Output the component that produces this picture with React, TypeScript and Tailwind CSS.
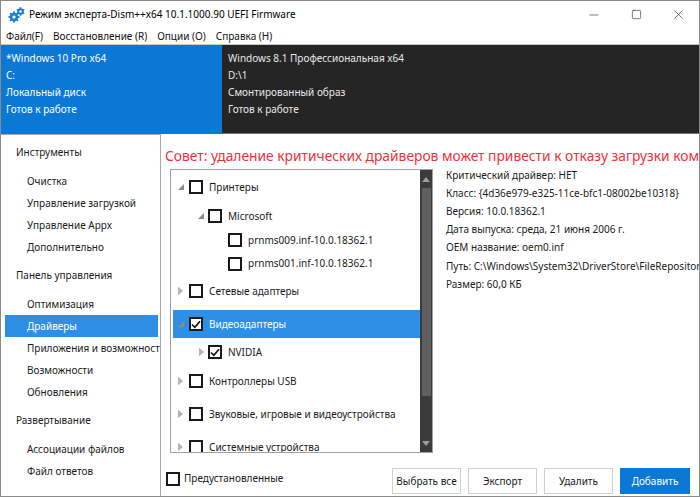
import { Minus, Square, X } from "lucide-react";

const FONT = { fontFamily: '"Noto Sans", "Open Sans", sans-serif' };

type Row = {
  label: string;
  level: 0 | 1 | 2;
  arrow: "open" | "closed" | null;
  checked?: boolean;
  selected?: boolean;
  cls: string;
};

const ROWS: Row[] = [
  { label: "Принтеры", level: 0, arrow: "open", cls: "mt-[5px] h-[24px]" },
  { label: "Microsoft", level: 1, arrow: "open", cls: "mt-[5px] h-[24px]" },
  { label: "prnms009.inf-10.0.18362.1", level: 2, arrow: null, cls: "mt-0 h-[24px]" },
  { label: "prnms001.inf-10.0.18362.1", level: 2, arrow: null, cls: "mt-0 h-[23px]" },
  { label: "Сетевые адаптеры", level: 0, arrow: "closed", cls: "mt-[4px] h-[24px]" },
  { label: "Видеоадаптеры", level: 0, arrow: "open", checked: true, selected: true, cls: "mt-[7px] h-[28px]" },
  { label: "NVIDIA", level: 1, arrow: "closed", checked: true, cls: "mt-[2px] h-[24px]" },
  { label: "Контроллеры USB", level: 0, arrow: "closed", cls: "mt-[5px] h-[24px]" },
  { label: "Звуковые, игровые и видеоустройства", level: 0, arrow: "closed", cls: "mt-[9px] h-[24px]" },
  { label: "Системные устройства", level: 0, arrow: "closed", cls: "mt-[9px] h-[24px]" },
];

const INFO = [
  "Критический драйвер: НЕТ",
  "Класс: {4d36e979-e325-11ce-bfc1-08002be10318}",
  "Версия: 10.0.18362.1",
  "Дата выпуска: среда, 21 июня 2006 г.",
  "OEM название: oem0.inf",
  "Путь: C:\\Windows\\System32\\DriverStore\\FileRepository\\prnms001.inf",
  "Размер: 60,0 КБ",
];

function GearIcon() {
  return (
    <svg width="17" height="16" viewBox="0 0 17 16">
      <g fill="#1c7fd6">
        <circle cx="6" cy="10" r="4.2" />
        <circle cx="12.5" cy="4.5" r="3.3" />
        {[0, 45, 90, 135].map((a) => (
          <rect key={a} x="5" y="4.5" width="2" height="11" transform={`rotate(${a} 6 10)`} />
        ))}
        {[0, 60, 120].map((a) => (
          <rect key={a} x="11.7" y="0.2" width="1.6" height="8.6" transform={`rotate(${a} 12.5 4.5)`} />
        ))}
      </g>
      <circle cx="6" cy="10" r="1.6" fill="#fff" />
      <circle cx="12.5" cy="4.5" r="1.2" fill="#fff" />
    </svg>
  );
}

function Arrow({ kind }: { kind: "open" | "closed" }) {
  if (kind === "open") {
    return (
      <svg width="6" height="6" viewBox="0 0 6 6">
        <path d="M6 0 L6 6 L0 6 Z" fill="#8a8a8a" />
      </svg>
    );
  }
  return (
    <svg width="5" height="8" viewBox="0 0 5 8">
      <path d="M0.5 0.5 L4.5 4 L0.5 7.5 Z" fill="#b5b5b5" stroke="#9a9a9a" strokeWidth="0.6" />
    </svg>
  );
}

function Check({ checked }: { checked?: boolean }) {
  return (
    <span className="flex h-[14px] w-[14px] shrink-0 items-center justify-center border-2 border-[#1a1a1a] bg-white">
      {checked && (
        <svg width="10" height="9" viewBox="0 0 10 9">
          <path d="M1 4.5 L3.8 7.3 L9 1.2" fill="none" stroke="#111" strokeWidth="1.7" />
        </svg>
      )}
    </span>
  );
}

function NavHead({ label, first }: { label: string; first?: boolean }) {
  return (
    <div className={`${first ? "" : "mt-[6px]"} mb-[7px] flex h-[22px] items-center pl-[15px] text-[10px] text-[#1a1a1a]`}>
      {label}
    </div>
  );
}

function NavItem({ label, active }: { label: string; active?: boolean }) {
  return (
    <div
      className={`flex h-[22px] items-center whitespace-nowrap text-[10px] ${
        active ? "ml-[4px] mr-[2px] bg-[#2d8fe6] pl-[22px] text-white" : "pl-[26px] text-[#1a1a1a]"
      }`}
    >
      {label}
    </div>
  );
}

export default function App() {
  return (
    <div className="flex h-[497px] w-[700px] flex-col overflow-hidden border border-[#8a8a8a] bg-white" style={FONT}>
      {/* Title bar */}
      <div className="flex h-[27px] shrink-0 items-center">
        <div className="ml-[7px] mr-[4px] flex items-center">
          <GearIcon />
        </div>
        <span className="text-[10px] text-black">Режим эксперта-Dism++x64 10.1.1000.90 UEFI Firmware</span>
        <div className="ml-auto flex h-full items-center text-[#222]">
          <div className="flex h-full w-[42px] items-center justify-center">
            <Minus size={14} strokeWidth={1} />
          </div>
          <div className="flex h-full w-[42px] items-center justify-center">
            <Square size={11} strokeWidth={1.3} />
          </div>
          <div className="flex h-full w-[42px] items-center justify-center">
            <X size={15} strokeWidth={1} />
          </div>
        </div>
      </div>

      {/* Menu */}
      <div className="flex h-[17px] shrink-0 items-center gap-[10px] border-b border-[#c8c8c8] pl-[5px] pt-[1px] text-[10px] text-[#111]">
        <span>Файл(F)</span>
        <span>Восстановление (R)</span>
        <span>Опции (O)</span>
        <span>Справка (H)</span>
      </div>

      {/* Images header */}
      <div className="flex h-[89px] shrink-0 text-[10px]">
        <div className="w-[221px] bg-[#0a78d4] pl-[5px] pt-[5px] text-white">
          <div className="flex h-[17px] items-center">*Windows 10 Pro x64</div>
          <div className="flex h-[17px] items-center">C:</div>
          <div className="flex h-[17px] items-center">Локальный диск</div>
          <div className="flex h-[17px] items-center">Готов к работе</div>
        </div>
        <div className="flex-1 border-b border-[#1e88e5] bg-[#252525] pl-[6px] pt-[5px] text-[#e8e8e8]">
          <div className="flex h-[17px] items-center">Windows 8.1 Профессиональная x64</div>
          <div className="flex h-[17px] items-center">D:\1</div>
          <div className="flex h-[17px] items-center">Смонтированный образ</div>
          <div className="flex h-[17px] items-center">Готов к работе</div>
        </div>
      </div>

      {/* Body */}
      <div className="flex min-h-0 flex-1">
        {/* Navigation */}
        <div className="w-[160px] shrink-0 overflow-hidden border-r border-t border-[#a8a8a8] pt-[6px]">
          <NavHead label="Инструменты" first />
          <NavItem label="Очистка" />
          <NavItem label="Управление загрузкой" />
          <NavItem label="Управление Appx" />
          <NavItem label="Дополнительно" />
          <NavHead label="Панель управления" />
          <NavItem label="Оптимизация" />
          <NavItem label="Драйверы" active />
          <NavItem label="Приложения и возможности" />
          <NavItem label="Возможности" />
          <NavItem label="Обновления" />
          <NavHead label="Развертывание" />
          <NavItem label="Ассоциации файлов" />
          <NavItem label="Файл ответов" />
        </div>

        {/* Main */}
        <div className="flex min-w-0 flex-1 flex-col">
          <div className="flex h-[35px] shrink-0 items-center overflow-hidden whitespace-nowrap pl-[4px] pt-[10px] text-[13.8px] text-[#f0313a]">
            Совет: удаление критических драйверов может привести к отказу загрузки компьютера
          </div>

          <div className="flex h-[284px] shrink-0 pl-[9px]">
            {/* Tree */}
            <div className="relative flex h-[284px] w-[263px] shrink-0 border border-[#a0a0a0]">
              <div className="min-w-0 flex-1 overflow-hidden">
                {ROWS.map((r, i) => (
                  <div
                    key={i}
                    className={`${r.cls} flex items-center whitespace-nowrap text-[10px] ${
                      r.selected ? "ml-[2px] bg-[#2d8fe6] pl-[5px] text-white" : "pl-[7px] text-[#1a1a1a]"
                    }`}
                  >
                    <div
                      className={`flex shrink-0 items-center ${
                        r.level === 0 ? "w-[10px]" : r.level === 1 ? "w-[30px] justify-end pr-[4px]" : "w-[49px]"
                      }`}
                    >
                      {r.arrow && <Arrow kind={r.arrow} />}
                    </div>
                    <div className={r.level === 1 ? "" : "ml-[1px]"}>
                      <Check checked={r.checked} />
                    </div>
                    <span className="ml-[6px]">{r.label}</span>
                  </div>
                ))}
              </div>
              {/* Scrollbar */}
              <div className="flex w-[12px] shrink-0 flex-col items-center bg-[#3b3b3d]">
                <div className="flex h-[18px] items-center justify-center">
                  <svg width="8" height="5" viewBox="0 0 8 5">
                    <path d="M0 5 L4 0 L8 5 Z" fill="#9c9c9c" />
                  </svg>
                </div>
                <div className="h-[208px] w-[9px] bg-[#5f5f62]" />
                <div className="flex-1" />
                <div className="flex h-[18px] items-center justify-center">
                  <svg width="8" height="5" viewBox="0 0 8 5">
                    <path d="M0 0 L8 0 L4 5 Z" fill="#9c9c9c" />
                  </svg>
                </div>
              </div>
            </div>

            {/* Info */}
            <div className="-mt-[3px] min-w-0 flex-1 overflow-hidden pl-[13px] text-[10px] text-[#1a1a1a]">
              {INFO.map((t) => (
                <div key={t} className="flex h-[18.2px] items-center whitespace-nowrap">
                  {t}
                </div>
              ))}
            </div>
          </div>

          {/* Bottom */}
          <div className="flex flex-1 items-end pb-[2px] pl-[5px] pr-[9px]">
            <div className="mb-[8px] flex items-center gap-[4px] text-[10px] text-[#1a1a1a]">
              <Check />
              <span>Предустановленные</span>
            </div>
            <div className="ml-auto flex gap-[7px] text-[10px]">
              <button className="h-[26px] w-[69px] whitespace-nowrap border border-[#d0d0d0] bg-white text-[#1a1a1a]">Выбрать все</button>
              <button className="h-[26px] w-[69px] border border-[#d0d0d0] bg-white text-[#1a1a1a]">Экспорт</button>
              <button className="h-[26px] w-[69px] border border-[#d0d0d0] bg-white text-[#1a1a1a]">Удалить</button>
              <button className="h-[26px] w-[70px] border border-[#0a78d4] bg-[#0a78d4] text-white">Добавить</button>
            </div>
          </div>
        </div>
      </div>
    </div>
  );
}
